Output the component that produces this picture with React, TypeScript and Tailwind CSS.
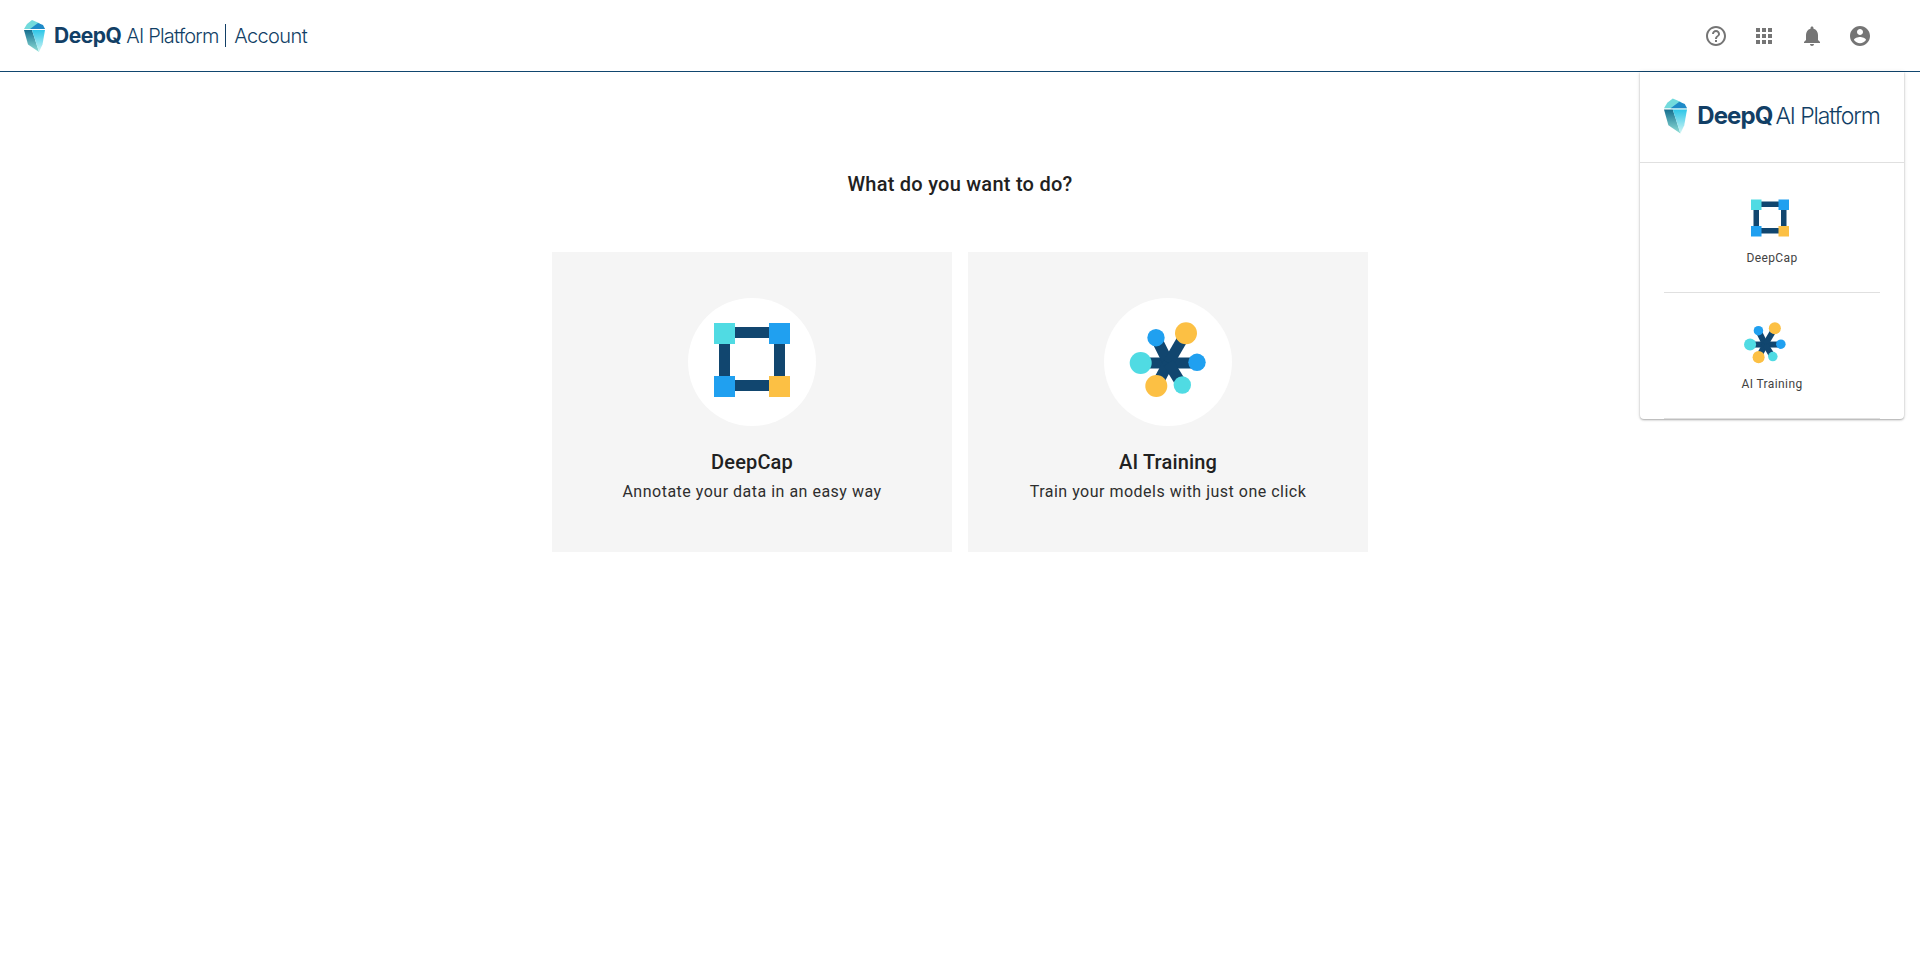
const GRAY = '#757575';

const headerIcons = [
  'M11 18h2v-2h-2v2zm1-16C6.48 2 2 6.48 2 12s4.48 10 10 10 10-4.48 10-10S17.52 2 12 2zm0 18c-4.41 0-8-3.59-8-8s3.59-8 8-8 8 3.59 8 8-3.59 8-8 8zm0-14c-2.21 0-4 1.79-4 4h2c0-1.1.9-2 2-2s2 .9 2 2c0 2-3 1.75-3 5h2c0-2.25 3-2.5 3-5 0-2.21-1.79-4-4-4z',
  'M4 8h4V4H4v4zm6 12h4v-4h-4v4zm-6 0h4v-4H4v4zm0-6h4v-4H4v4zm6 0h4v-4h-4v4zm6-10v4h4V4h-4zm-6 4h4V4h-4v4zm6 6h4v-4h-4v4zm0 6h4v-4h-4v4z',
  'M12 22c1.1 0 2-.9 2-2h-4c0 1.1.89 2 2 2zm6-6v-5c0-3.07-1.64-5.64-4.5-6.32V4c0-.83-.67-1.5-1.5-1.5s-1.5.67-1.5 1.5v.68C7.63 5.36 6 7.92 6 11v5l-2 2v1h16v-1l-2-2z',
  'M12 2C6.48 2 2 6.48 2 12s4.48 10 10 10 10-4.48 10-10S17.52 2 12 2zm0 3c1.66 0 3 1.34 3 3s-1.34 3-3 3-3-1.34-3-3 1.34-3 3-3zm0 14.2c-2.5 0-4.71-1.28-6-3.22.03-1.99 4-3.08 6-3.08 1.99 0 5.97 1.09 6 3.08-1.29 1.94-3.5 3.22-6 3.22z',
];

function Gem({ id, width, height }: { id: string; width: number; height: number }) {
  return (
    <svg width={width} height={height} viewBox="0 0 21 32">
      <defs>
        <linearGradient id={`${id}-a`} x1="0" y1="0" x2="0" y2="1">
          <stop offset="0" stopColor="#176f8f" />
          <stop offset="1" stopColor="#8fe0d8" />
        </linearGradient>
        <linearGradient id={`${id}-b`} x1="0" y1="0" x2="0" y2="1">
          <stop offset="0" stopColor="#2cc6e8" />
          <stop offset="1" stopColor="#d4f6f4" />
        </linearGradient>
      </defs>
      <polygon points="8,0 15,3 21,9 0,9 3,4" fill="#72dadc" />
      <polygon points="14,3 19,5 21,9 6,9" fill="#1f8ac8" />
      <polygon points="0,10 8,10 15,32 4,24.5" fill={`url(#${id}-a)`} />
      <polygon points="8,10 21,10 18.5,24.5 15,32" fill={`url(#${id}-b)`} />
    </svg>
  );
}

function DeepCapIcon({ size }: { size: number }) {
  return (
    <svg width={size} height={size} viewBox="0 0 128 128">
      <rect x="36" y="29" width="66" height="11" fill="#11466f" />
      <rect x="36" y="82" width="66" height="11" fill="#11466f" />
      <rect x="31" y="35" width="11" height="52" fill="#11466f" />
      <rect x="86" y="35" width="11" height="52" fill="#11466f" />
      <rect x="26" y="25" width="21" height="21" fill="#50dbe3" />
      <rect x="81" y="25" width="21" height="21" fill="#20a0f0" />
      <rect x="26" y="78" width="21" height="21" fill="#20a0f0" />
      <rect x="81" y="78" width="21" height="21" fill="#fcc044" />
    </svg>
  );
}

function TrainingIcon({ size }: { size: number }) {
  return (
    <svg width={size} height={size} viewBox="0 0 128 128">
      <g stroke="#11466f" strokeWidth="11">
        <line x1="64.5" y1="65" x2="36.7" y2="65" />
        <line x1="64.5" y1="65" x2="93" y2="65" />
        <line x1="64.5" y1="65" x2="52" y2="40" />
        <line x1="64.5" y1="65" x2="82" y2="35" />
        <line x1="64.5" y1="65" x2="52" y2="88" />
        <line x1="64.5" y1="65" x2="78" y2="87" />
      </g>
      <circle cx="36.7" cy="65" r="11" fill="#50dbe3" />
      <circle cx="52" cy="39.7" r="8.7" fill="#20a0f0" />
      <circle cx="82" cy="35.3" r="11" fill="#fcc044" />
      <circle cx="93" cy="64.3" r="8.7" fill="#20a0f0" />
      <circle cx="52.3" cy="88" r="11" fill="#fcc044" />
      <circle cx="78.3" cy="87" r="8.7" fill="#50dbe3" />
    </svg>
  );
}

function ChoiceCard({ title, text, children }: { title: string; text: string; children: React.ReactNode }) {
  return (
    <div className="flex h-[300px] w-[400px] flex-col items-center bg-[#f5f5f5] pt-[46px]">
      <div className="flex h-32 w-32 items-center justify-center rounded-full bg-white">{children}</div>
      <h2 className="mt-[22px] text-[20px] leading-[28px] font-medium tracking-[0.15px] text-[#212121]">{title}</h2>
      <p className="mt-[4px] text-[16px] leading-[24px] tracking-[0.5px] text-[#2e2e2e]">{text}</p>
    </div>
  );
}

export default function App() {
  return (
    <div className="relative min-h-[963px] bg-white font-['Roboto',sans-serif]">
      <header className="flex h-[72px] items-center justify-between border-b border-[#11466f] pl-6 pr-12">
        <div className="flex items-center text-[#123f66] font-['Inter',sans-serif]">
          <Gem id="top" width={21} height={32} />
          <span className="ml-[9px] text-[21px] leading-none font-bold tracking-[-0.5px]">DeepQ</span>
          <span className="ml-[5px] text-[20px] leading-none font-light tracking-[-0.8px]">AI Platform</span>
          <span className="ml-[6px] h-[23px] w-[1.5px] bg-[#123f66]" />
          <span className="ml-[8px] text-[20px] leading-none font-light tracking-[-0.6px]">Account</span>
        </div>
        <div className="flex items-center gap-6">
          {headerIcons.map((d) => (
            <svg key={d} width="24" height="24" viewBox="0 0 24 24" fill={GRAY}>
              <path d={d} />
            </svg>
          ))}
        </div>
      </header>

      <main className="flex flex-col items-center pt-[100px]">
        <h1 className="text-[20px] leading-[24px] font-medium tracking-[0.25px] text-[#212121]">
          What do you want to do?
        </h1>
        <div className="mt-[56px] flex gap-4">
          <ChoiceCard title="DeepCap" text="Annotate your data in an easy way">
            <DeepCapIcon size={128} />
          </ChoiceCard>
          <ChoiceCard title="AI Training" text="Train your models with just one click">
            <TrainingIcon size={128} />
          </ChoiceCard>
        </div>
      </main>

      <aside className="absolute right-4 top-[72px] flex h-[347px] w-[264px] flex-col rounded-b bg-white shadow-[0_1px_2px_rgba(0,0,0,0.3),0_0_4px_rgba(0,0,0,0.1)]">
        <div className="flex h-[91px] items-center justify-center border-b border-[#e0e0e0] pb-[2px] text-[#123f66] font-['Inter',sans-serif]">
          <Gem id="panel" width={23} height={36} />
          <span className="ml-[10px] text-[24px] leading-none font-bold tracking-[-0.9px]">DeepQ</span>
          <span className="ml-[3px] text-[23px] leading-none font-light tracking-[-1.1px]">AI Platform</span>
        </div>
        <div className="mx-6 flex h-[130px] flex-col items-center border-b border-[#e0e0e0]">
          <div className="mt-6 mr-1">
            <DeepCapIcon size={64} />
          </div>
          <span className="mt-[-1px] text-[12px] leading-[16px] tracking-[0.4px] text-[#424242]">DeepCap</span>
        </div>
        <div className="mx-6 flex flex-1 flex-col items-center border-b border-[#e0e0e0]">
          <div className="mt-[16px] mr-[14px]">
            <TrainingIcon size={70} />
          </div>
          <span className="mt-[-3px] text-[12px] leading-[16px] tracking-[0.4px] text-[#424242]">AI Training</span>
        </div>
      </aside>
    </div>
  );
}
